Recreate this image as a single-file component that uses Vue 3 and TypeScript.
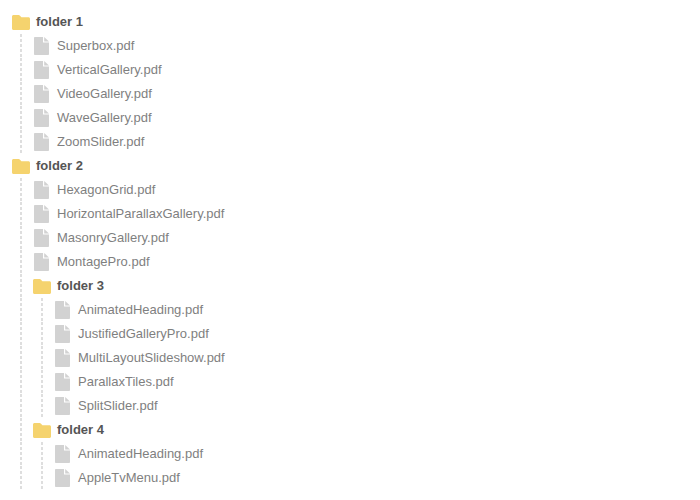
<script setup lang="ts">
interface TreeNode {
  name: string;
  children?: TreeNode[];
}

const files = (...names: string[]): TreeNode[] => names.map((name) => ({ name: name + ".pdf" }));

const tree: TreeNode[] = [
  {
    name: "folder 1",
    children: files("Superbox", "VerticalGallery", "VideoGallery", "WaveGallery", "ZoomSlider"),
  },
  {
    name: "folder 2",
    children: [
      ...files("HexagonGrid", "HorizontalParallaxGallery", "MasonryGallery", "MontagePro"),
      {
        name: "folder 3",
        children: files(
          "AnimatedHeading",
          "JustifiedGalleryPro",
          "MultiLayoutSlideshow",
          "ParallaxTiles",
          "SplitSlider"
        ),
      },
      {
        name: "folder 4",
        children: files("AnimatedHeading", "AppleTvMenu"),
      },
    ],
  },
];

// flat rows keep the template free of a recursive component
interface Row {
  name: string;
  folder: boolean;
  depth: number;
}
const rows: Row[] = [];
const walk = (nodes: TreeNode[], depth: number) => {
  for (const n of nodes) {
    rows.push({ name: n.name, folder: !!n.children, depth });
    if (n.children) walk(n.children, depth + 1);
  }
};
walk(tree, 0);
</script>

<template>
  <div class="page">
    <ul class="tree">
      <li v-for="(row, i) in rows" :key="i" class="row">
        <span v-for="d in row.depth" :key="d" class="guide"></span>
        <svg v-if="row.folder" class="folder-icon" viewBox="0 0 18 15" width="18" height="15">
          <path
            d="M1.5 0H6.6C7.2 0 7.6.3 8 .7L9.4 2.2H16.5C17.3 2.2 18 2.9 18 3.7V13.5C18 14.3 17.3 15 16.5 15H1.5C.7 15 0 14.3 0 13.5V1.5C0 .7.7 0 1.5 0Z"
            fill="#f5d36e"
          />
        </svg>
        <svg v-else class="file-icon" viewBox="0 0 15 18" width="15" height="18">
          <path d="M0 .8C0 .4.4 0 .8 0H9V5.5H15V17.2C15 17.6 14.6 18 14.2 18H.8C.4 18 0 17.6 0 17.2Z" fill="#d2d2d2" />
          <path d="M10.2 0 15 4.4H10.2Z" fill="#d2d2d2" />
        </svg>
        <span :class="row.folder ? 'folder-name' : 'file-name'">{{ row.name }}</span>
      </li>
    </ul>
  </div>
</template>

<style scoped>
.page {
  width: 700px;
  height: 500px;
  overflow: hidden;
  box-sizing: border-box;
  padding: 10px 0 0 12px;
  background: #fff;
  font-family: "Liberation Sans", Arial, sans-serif;
  font-size: 13px;
}

.tree {
  list-style: none;
  margin: 0;
  padding: 0;
}

.row {
  display: flex;
  align-items: center;
  height: 24px;
  white-space: nowrap;
}

.guide {
  align-self: stretch;
  width: 21px;
  flex: none;
  position: relative;
}

.guide::before {
  content: "";
  position: absolute;
  top: 0;
  bottom: 0;
  left: 8px;
  width: 2px;
  background: repeating-linear-gradient(to bottom, #dedede 0 3px, transparent 3px 5px);
}

.folder-icon {
  flex: none;
  margin-right: 6px;
}

.file-icon {
  flex: none;
  margin: 0 8px 0 1px;
}

.folder-name {
  font-weight: 700;
  color: #555;
  margin-bottom: 2px;
}

.file-name {
  color: #7f7f7f;
  margin-bottom: 2px;
}
</style>
